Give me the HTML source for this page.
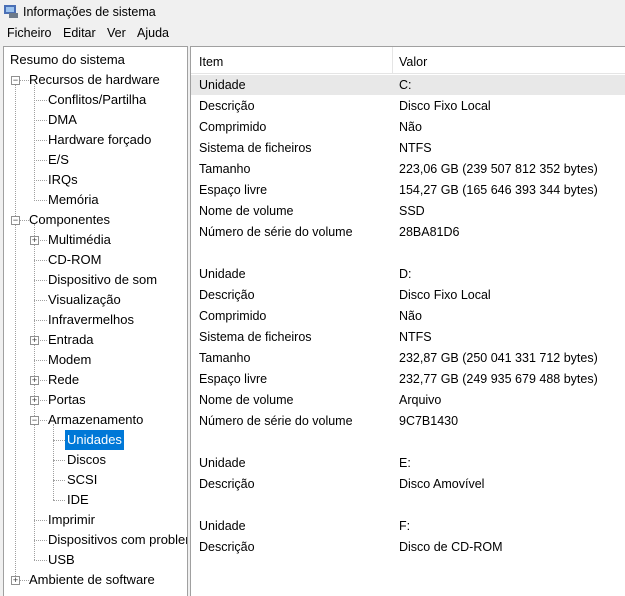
<!DOCTYPE html><html><head><style>
body{margin:0;width:625px;height:595px;background:#f0f0f0;font-family:"Liberation Sans",sans-serif;font-size:12.5px;color:#000;position:relative;overflow:hidden}
.a{position:absolute;white-space:nowrap;line-height:16px}
#lp{position:absolute;left:3px;top:46px;width:183px;height:549px;background:#fff;border:1px solid #a0a0a0;border-bottom:none;overflow:hidden;font-size:13px}
#rp{position:absolute;left:190px;top:46px;width:440px;height:549px;background:#fff;border:1px solid #a0a0a0;border-bottom:none;overflow:hidden}
.v{position:absolute;border-left:1px dotted #a0a0a0;width:0}
.h{position:absolute;border-top:1px dotted #a0a0a0;height:0}
.b{position:absolute;width:7px;height:7px;border:1px solid #909090;background:#fff;font-size:9px;line-height:7px;text-align:center;color:#333}
</style></head><body>
<svg class="a" style="left:3px;top:3px" width="16" height="16"><rect x="1" y="2" width="12" height="9" fill="#4a6fb5"/><rect x="3" y="4" width="8" height="5" fill="#9cc3ee"/><rect x="6" y="10" width="9" height="5" fill="#6d7a8a"/></svg>
<div class="a" style="left:23px;top:4px">Informações de sistema</div>
<div class="a" style="left:7px;top:25px">Ficheiro</div>
<div class="a" style="left:63px;top:25px">Editar</div>
<div class="a" style="left:107px;top:25px">Ver</div>
<div class="a" style="left:137px;top:25px">Ajuda</div>
<div id="lp">
<div class="v" style="left:11px;top:37px;height:500px"></div>
<div class="v" style="left:30px;top:37px;height:117px"></div>
<div class="v" style="left:30px;top:177px;height:336px"></div>
<div class="v" style="left:49px;top:377px;height:76px"></div>
<div class="h" style="left:11px;top:33px;width:14px"></div>
<div class="h" style="left:30px;top:53px;width:13px"></div><div class="h" style="left:30px;top:73px;width:13px"></div><div class="h" style="left:30px;top:93px;width:13px"></div><div class="h" style="left:30px;top:113px;width:13px"></div><div class="h" style="left:30px;top:133px;width:13px"></div><div class="h" style="left:30px;top:153px;width:13px"></div>
<div class="h" style="left:11px;top:173px;width:14px"></div>
<div class="h" style="left:30px;top:193px;width:13px"></div><div class="h" style="left:30px;top:213px;width:13px"></div><div class="h" style="left:30px;top:233px;width:13px"></div><div class="h" style="left:30px;top:253px;width:13px"></div><div class="h" style="left:30px;top:273px;width:13px"></div><div class="h" style="left:30px;top:293px;width:13px"></div><div class="h" style="left:30px;top:313px;width:13px"></div><div class="h" style="left:30px;top:333px;width:13px"></div><div class="h" style="left:30px;top:353px;width:13px"></div><div class="h" style="left:30px;top:373px;width:13px"></div>
<div class="h" style="left:49px;top:393px;width:12px"></div><div class="h" style="left:49px;top:413px;width:12px"></div><div class="h" style="left:49px;top:433px;width:12px"></div><div class="h" style="left:49px;top:453px;width:12px"></div>
<div class="h" style="left:30px;top:473px;width:13px"></div><div class="h" style="left:30px;top:493px;width:13px"></div><div class="h" style="left:30px;top:513px;width:13px"></div>
<div class="h" style="left:11px;top:533px;width:14px"></div>
<div class="b" style="left:7px;top:29px">−</div>
<div class="b" style="left:7px;top:169px">−</div>
<div class="b" style="left:26px;top:189px">+</div>
<div class="b" style="left:26px;top:289px">+</div>
<div class="b" style="left:26px;top:329px">+</div>
<div class="b" style="left:26px;top:349px">+</div>
<div class="b" style="left:26px;top:369px">−</div>
<div class="b" style="left:7px;top:529px">+</div>
<div class="a" style="left:6px;top:5px">Resumo do sistema</div>
<div class="a" style="left:25px;top:25px">Recursos de hardware</div>
<div class="a" style="left:44px;top:45px">Conflitos/Partilha</div>
<div class="a" style="left:44px;top:65px">DMA</div>
<div class="a" style="left:44px;top:85px">Hardware forçado</div>
<div class="a" style="left:44px;top:105px">E/S</div>
<div class="a" style="left:44px;top:125px">IRQs</div>
<div class="a" style="left:44px;top:145px">Memória</div>
<div class="a" style="left:25px;top:165px">Componentes</div>
<div class="a" style="left:44px;top:185px">Multimédia</div>
<div class="a" style="left:44px;top:205px">CD-ROM</div>
<div class="a" style="left:44px;top:225px">Dispositivo de som</div>
<div class="a" style="left:44px;top:245px">Visualização</div>
<div class="a" style="left:44px;top:265px">Infravermelhos</div>
<div class="a" style="left:44px;top:285px">Entrada</div>
<div class="a" style="left:44px;top:305px">Modem</div>
<div class="a" style="left:44px;top:325px">Rede</div>
<div class="a" style="left:44px;top:345px">Portas</div>
<div class="a" style="left:44px;top:365px">Armazenamento</div>
<div class="a" style="left:61px;top:383px;height:20px;line-height:20px;padding:0 2px;background:#0078d7;color:#fff">Unidades</div>
<div class="a" style="left:63px;top:405px">Discos</div>
<div class="a" style="left:63px;top:425px">SCSI</div>
<div class="a" style="left:63px;top:445px">IDE</div>
<div class="a" style="left:44px;top:465px">Imprimir</div>
<div class="a" style="left:44px;top:485px">Dispositivos com problemas</div>
<div class="a" style="left:44px;top:505px">USB</div>
<div class="a" style="left:25px;top:525px">Ambiente de software</div>
</div>
<div id="rp">
<div style="position:absolute;left:0;top:0;width:440px;height:26px;border-bottom:1px solid #e5e5e5"></div>
<div style="position:absolute;left:201px;top:0;height:26px;border-left:1px solid #e5e5e5"></div>
<div class="a" style="left:8px;top:7px">Item</div>
<div class="a" style="left:208px;top:7px">Valor</div>
<div style="position:absolute;left:0;top:28px;width:440px;height:20px;background:#e8e8e8"></div>
<div id="rows"></div>
</div>
<script>
var d=[["Unidade","C:"],["Descrição","Disco Fixo Local"],["Comprimido","Não"],["Sistema de ficheiros","NTFS"],["Tamanho","223,06 GB (239 507 812 352 bytes)"],["Espaço livre","154,27 GB (165 646 393 344 bytes)"],["Nome de volume","SSD"],["Número de série do volume","28BA81D6"],["",""],
["Unidade","D:"],["Descrição","Disco Fixo Local"],["Comprimido","Não"],["Sistema de ficheiros","NTFS"],["Tamanho","232,87 GB (250 041 331 712 bytes)"],["Espaço livre","232,77 GB (249 935 679 488 bytes)"],["Nome de volume","Arquivo"],["Número de série do volume","9C7B1430"],["",""],
["Unidade","E:"],["Descrição","Disco Amovível"],["",""],["Unidade","F:"],["Descrição","Disco de CD-ROM"]];
var h="";d.forEach(function(r,i){var t=30+i*21;h+='<div class="a" style="left:8px;top:'+t+'px">'+r[0]+'</div><div class="a" style="left:208px;top:'+t+'px">'+r[1]+'</div>';});
document.getElementById("rows").innerHTML=h;
</script>
</body></html>
